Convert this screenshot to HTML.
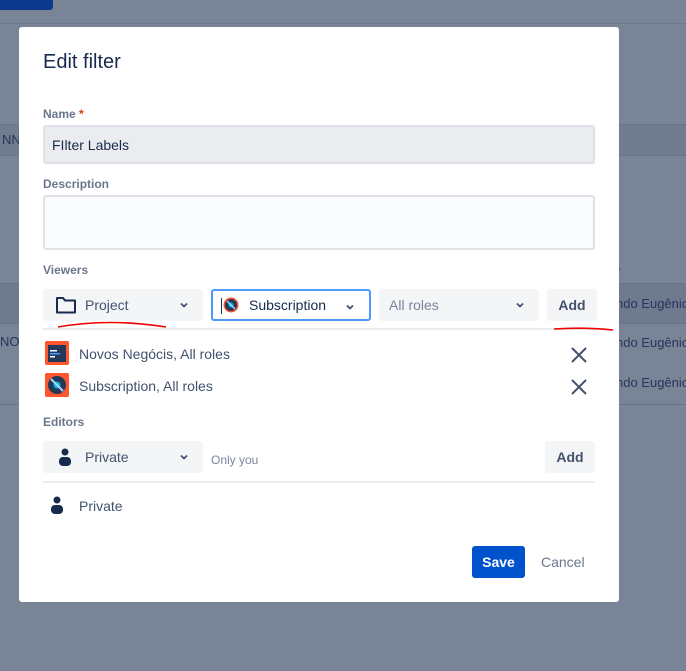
<!DOCTYPE html>
<html><head><meta charset="utf-8"><style>
*{box-sizing:border-box;margin:0;padding:0}
body{width:686px;height:671px;overflow:hidden;background:#7a8497;font-family:"Liberation Sans",Arial,sans-serif;position:relative;color:#172b4d}
.a{position:absolute;white-space:nowrap}
.lbl{position:absolute;left:43px;font-size:12px;font-weight:bold;color:#6b778c}
.sel{position:absolute;height:32px;background:#f4f5f7;border-radius:3px;font-size:14px;color:#42526e;display:flex;align-items:center}
.chev{position:absolute;right:14px;top:11px}
.x{position:absolute;left:571px;width:16px;height:16px}
</style></head><body>
<div class="a" style="left:0;top:0;width:53px;height:10px;background:#0b3a8c;border-radius:0 0 3px 0"></div>
<div class="a" style="left:0;top:23px;width:686px;height:1px;background:#6d778a"></div>
<div class="a" style="left:0;top:124px;width:686px;height:32px;background:#727c8f;border-top:1px solid #6a7487;border-bottom:1px solid #6a7487"></div>
<div class="a" style="left:2px;top:132px;font-size:13px;color:#27355a">NN</div>
<div class="a" style="left:610px;top:264px;font-size:12px;color:#2b3856">er</div>
<div class="a" style="left:0;top:283px;width:686px;height:40px;background:#6f7a8e;border-top:1px solid #68728a"></div>
<div class="a" style="left:0;top:323px;width:686px;height:1px;background:#68728a"></div>
<div class="a" style="left:0;top:404px;width:686px;height:1px;background:#68728a"></div>
<div class="a" style="left:0;top:334px;font-size:13px;color:#27355a">NOT</div>
<div class="a" style="left:616px;top:296px;font-size:13px;color:#27355a">ndo Eugênio</div>
<div class="a" style="left:616px;top:335px;font-size:13px;color:#27355a">ndo Eugênio</div>
<div class="a" style="left:616px;top:375px;font-size:13px;color:#27355a">ndo Eugênio</div>

<div class="a" style="left:19px;top:27px;width:600px;height:575px;background:#fff;border-radius:3px"></div>
<div class="a" style="left:43px;top:51px;font-size:20px;color:#172b4d">Edit filter</div>

<div class="lbl" style="top:107px">Name<span style="color:#de350b"> *</span></div>
<div class="a" style="left:43px;top:125px;width:552px;height:39px;background:#ebecf0;border:2px solid #dfe1e6;border-radius:3px;font-size:14px;padding:10px 0 0 7px;color:#172b4d">FIlter Labels</div>
<div class="lbl" style="top:177px">Description</div>
<div class="a" style="left:43px;top:195px;width:552px;height:55px;background:#fafbfc;border:2px solid #dfe1e6;border-radius:3px"></div>
<div class="lbl" style="top:263px">Viewers</div>

<div class="sel" style="left:43px;top:289px;width:160px"><svg class="a" style="left:12px;top:7px" width="22" height="18" viewBox="0 0 22 18"><path d="M2 2h6l2 2.5h10v12H2z" fill="none" stroke="#172b4d" stroke-width="2" stroke-linejoin="round"/></svg><span style="margin-left:42px">Project</span><svg class="chev" width="10" height="10" viewBox="0 0 10 10"><path d="M2 3.5l3 3 3-3" fill="none" stroke="#42526e" stroke-width="1.8"/></svg></div>
<div class="sel" style="left:211px;top:289px;width:160px;background:#fff;border:2px solid #4c9aff"><div class="a" style="left:8px;top:7px;width:1px;height:16px;background:#172b4d"></div><svg class="a" style="left:10px;top:6px" width="16" height="16" viewBox="0 0 16 16"><circle cx="8" cy="8" r="7.5" fill="#ff5630"/><circle cx="8" cy="8" r="6" fill="#253858"/><circle cx="8" cy="8" r="2.5" fill="#00b8d9"/><path d="M4 4l8 8" stroke="#b3d4ff" stroke-width="1.5"/></svg><span style="margin-left:36px;color:#172b4d">Subscription</span><svg class="chev" width="10" height="10" viewBox="0 0 10 10"><path d="M2 3.5l3 3 3-3" fill="none" stroke="#42526e" stroke-width="1.8"/></svg></div>
<div class="sel" style="left:379px;top:289px;width:160px;color:#7a869a"><span style="margin-left:10px">All roles</span><svg class="chev" width="10" height="10" viewBox="0 0 10 10"><path d="M2 3.5l3 3 3-3" fill="none" stroke="#42526e" stroke-width="1.8"/></svg></div>
<div class="sel" style="left:547px;top:289px;width:50px;justify-content:center;font-weight:bold;color:#42526e">Add</div>
<div class="a" style="left:43px;top:328px;width:552px;height:2px;background:#ebecf0"></div>
<svg class="a" style="left:0;top:0" width="686" height="671"><path d="M58 327Q110 318 166 327" fill="none" stroke="#e00" stroke-width="1.6"/><path d="M554 329Q585 327 613 330" fill="none" stroke="#e00" stroke-width="1.6"/></svg>

<svg class="a" style="left:45px;top:341px" width="24" height="24" viewBox="0 0 24 24"><rect width="24" height="24" rx="2" fill="#ff5630"/><rect x="3" y="4" width="18" height="17" fill="#253858"/><rect x="5" y="9" width="7" height="1.5" fill="#fff"/><rect x="5" y="12" width="10" height="1.5" fill="#4c9aff"/><rect x="5" y="15" width="5" height="1.5" fill="#fff"/></svg>
<div class="a" style="left:79px;top:346px;font-size:14px;color:#42526e">Novos Negócis, All roles</div>
<svg class="x" style="top:347px" viewBox="0 0 16 16"><path d="M1 1l14 14M15 1L1 15" stroke="#42526e" stroke-width="2"/></svg>
<svg class="a" style="left:45px;top:373px" width="24" height="24" viewBox="0 0 24 24"><rect width="24" height="24" rx="2" fill="#ff5630"/><circle cx="12" cy="12" r="9" fill="#253858"/><circle cx="12" cy="12" r="3.5" fill="#00b8d9"/><path d="M6 6l12 12" stroke="#b3d4ff" stroke-width="2"/></svg>
<div class="a" style="left:79px;top:378px;font-size:14px;color:#42526e">Subscription, All roles</div>
<svg class="x" style="top:379px" viewBox="0 0 16 16"><path d="M1 1l14 14M15 1L1 15" stroke="#42526e" stroke-width="2"/></svg>

<div class="lbl" style="top:415px">Editors</div>
<div class="sel" style="left:43px;top:441px;width:160px"><svg class="a" style="left:15px;top:7px" width="14" height="18" viewBox="0 0 14 18"><circle cx="7" cy="4" r="3.5" fill="#172b4d"/><rect x="1" y="9" width="12" height="9" rx="4" fill="#172b4d"/></svg><span style="margin-left:42px">Private</span><svg class="chev" width="10" height="10" viewBox="0 0 10 10"><path d="M2 3.5l3 3 3-3" fill="none" stroke="#42526e" stroke-width="1.8"/></svg></div>
<div class="a" style="left:211px;top:453px;font-size:12px;color:#7a869a">Only you</div>
<div class="sel" style="left:545px;top:441px;width:50px;justify-content:center;font-weight:bold;color:#42526e">Add</div>
<div class="a" style="left:43px;top:481px;width:552px;height:2px;background:#ebecf0"></div>
<svg class="a" style="left:50px;top:496px" width="14" height="18" viewBox="0 0 14 18"><circle cx="7" cy="4" r="3.5" fill="#172b4d"/><rect x="1" y="9" width="12" height="9" rx="4" fill="#172b4d"/></svg>
<div class="a" style="left:79px;top:498px;font-size:14px;color:#42526e">Private</div>

<div class="a" style="left:472px;top:546px;width:53px;height:32px;background:#0052cc;border-radius:3px;color:#fff;font-weight:bold;font-size:14px;text-align:center;line-height:32px">Save</div>
<div class="a" style="left:541px;top:554px;font-size:14px;color:#6b778c">Cancel</div>
</body></html>
